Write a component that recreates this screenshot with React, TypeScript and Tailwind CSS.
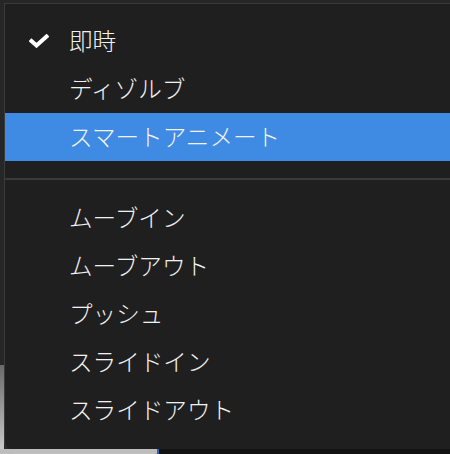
import React from "react";

const items1 = ["即時", "ディゾルブ", "スマートアニメート"];
const items2 = ["ムーブイン", "ムーブアウト", "プッシュ", "スライドイン", "スライドアウト"];

function Check() {
  return (
    <svg width="20" height="14" viewBox="0 0 20 14" className="block">
      <path d="M2.5 7 L7.5 11.5 L17.5 2.5" fill="none" stroke="#ffffff" strokeWidth="4" strokeLinecap="square" strokeLinejoin="miter" />
    </svg>
  );
}

function Row({ label, checked, active }: { label: string; checked?: boolean; active?: boolean }) {
  return (
    <div className={`flex h-[48px] items-center ${active ? "bg-[#3f8ae2]" : ""}`}>
      <div className="flex w-[64px] shrink-0 justify-end pr-[20px]">{checked ? <Check /> : null}</div>
      <span className="text-[23.6px] font-light leading-none text-[#f2f2f2]">{label}</span>
    </div>
  );
}

export default function App() {
  return (
    <div
      className="relative h-[454px] w-[450px] overflow-hidden bg-[#262626]"
      style={{ fontFamily: '"Noto Sans CJK JP", "Noto Sans", sans-serif' }}
    >
      <div className="flex h-full flex-col">
        <div className="flex flex-1">
          <div className="flex w-[4px] flex-col">
            <div className="h-[365px] bg-[#262626]" />
            <div className="flex-1 bg-gradient-to-b from-[#6a6a6a] to-[#c8c8c8]" />
          </div>
          <div className="flex-1" />
        </div>
        <div className="flex h-[5px]">
          <div className="w-[157px] bg-[#bdbdbd]" />
          <div className="w-[2px] bg-[#2f63b0]" />
          <div className="flex-1 bg-[#121212]" />
        </div>
      </div>
      <div className="absolute left-[4px] top-[3px] w-[446px] rounded-bl-[6px] border-l border-t border-[#3a3a3a] bg-[#1f1f1f] pb-[15px] pt-[13px]">
        <Row label={items1[0]} checked />
        <Row label={items1[1]} />
        <Row label={items1[2]} active />
        <div className="mb-[14px] mt-[17px] h-[2px] bg-[#3a3a3a]" />
        {items2.map((l) => (
          <Row key={l} label={l} />
        ))}
      </div>
    </div>
  );
}
